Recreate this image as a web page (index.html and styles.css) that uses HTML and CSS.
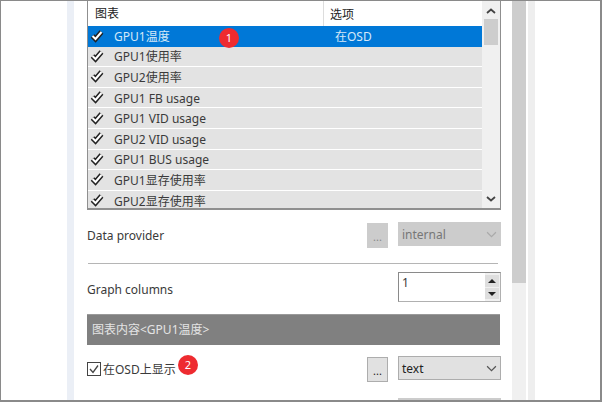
FILE: index.html
```html
<!DOCTYPE html>
<html lang="zh">
<head>
<meta charset="utf-8">
<title>Graph settings</title>
<link rel="stylesheet" href="styles.css">
</head>
<body>
<div class="frame">
  <div class="gutter"><div class="strip"></div></div>
  <div class="panel">
    <div class="listbox">
      <div class="list">
        <div class="head"><span class="c1">图表</span><span class="c2">选项</span></div>
        <div class="row sel"><svg class="chk" viewBox="0 0 14 13"><path class="o" d="M2.5 7 5.5 10 11.5 3"/><path class="i" d="M2.5 7 5.5 10 11.5 3"/></svg><span class="c1n">GPU1温度</span><span class="c2n">在OSD</span></div>
        <div class="row"><svg class="chk" viewBox="0 0 14 13"><path class="o" d="M2.5 7 5.5 10 11.5 3"/><path class="i" d="M2.5 7 5.5 10 11.5 3"/></svg><span class="c1n">GPU1使用率</span></div>
        <div class="row"><svg class="chk" viewBox="0 0 14 13"><path class="o" d="M2.5 7 5.5 10 11.5 3"/><path class="i" d="M2.5 7 5.5 10 11.5 3"/></svg><span class="c1n">GPU2使用率</span></div>
        <div class="row"><svg class="chk" viewBox="0 0 14 13"><path class="o" d="M2.5 7 5.5 10 11.5 3"/><path class="i" d="M2.5 7 5.5 10 11.5 3"/></svg><span class="c1n">GPU1 FB usage</span></div>
        <div class="row"><svg class="chk" viewBox="0 0 14 13"><path class="o" d="M2.5 7 5.5 10 11.5 3"/><path class="i" d="M2.5 7 5.5 10 11.5 3"/></svg><span class="c1n">GPU1 VID usage</span></div>
        <div class="row"><svg class="chk" viewBox="0 0 14 13"><path class="o" d="M2.5 7 5.5 10 11.5 3"/><path class="i" d="M2.5 7 5.5 10 11.5 3"/></svg><span class="c1n">GPU2 VID usage</span></div>
        <div class="row"><svg class="chk" viewBox="0 0 14 13"><path class="o" d="M2.5 7 5.5 10 11.5 3"/><path class="i" d="M2.5 7 5.5 10 11.5 3"/></svg><span class="c1n">GPU1 BUS usage</span></div>
        <div class="row"><svg class="chk" viewBox="0 0 14 13"><path class="o" d="M2.5 7 5.5 10 11.5 3"/><path class="i" d="M2.5 7 5.5 10 11.5 3"/></svg><span class="c1n">GPU1显存使用率</span></div>
        <div class="row"><svg class="chk" viewBox="0 0 14 13"><path class="o" d="M2.5 7 5.5 10 11.5 3"/><path class="i" d="M2.5 7 5.5 10 11.5 3"/></svg><span class="c1n">GPU2显存使用率</span></div>
      </div>
      <div class="vscroll">
        <svg class="arrow a-up" viewBox="0 0 10 6"><path d="M1 5 5 1.5 9 5"/></svg>
        <div class="vthumb"></div>
        <div class="vspace"></div>
        <svg class="arrow a-down" viewBox="0 0 10 6"><path d="M1 1 5 4.5 9 1"/></svg>
      </div>
      <span class="badge b1">1</span>
    </div>
    <div class="field f-provider">
      <span class="label">Data provider</span>
      <span class="dots off">...</span>
      <span class="select off"><span>internal</span><svg viewBox="0 0 10 6"><path d="M1 1 5 5 9 1"/></svg></span>
    </div>
    <div class="rule"></div>
    <div class="field f-columns">
      <span class="label">Graph columns</span>
      <span class="spin"><span class="val">1</span><span class="btns"><i class="up"></i><i class="down"></i></span></span>
    </div>
    <div class="banner">图表内容&lt;GPU1温度&gt;</div>
    <div class="field f-osd">
      <label class="check"><svg class="cb" viewBox="0 0 14 14"><rect x=".5" y=".5" width="13" height="13"/><path d="M3 7 6 10.5 11 3.5"/></svg>在OSD上显示<span class="badge b2">2</span></label>
      <span class="dots">...</span>
      <span class="select"><span>text</span><svg viewBox="0 0 10 6"><path d="M1 1 5 5 9 1"/></svg></span>
    </div>
    <div class="cut"></div>
  </div>
  <div class="track"><div class="thumb"></div></div>
  <div class="strip2"></div>
</div>
</body>
</html>
```
FILE: styles.css
```css
* { box-sizing: border-box; }
html, body { margin: 0; padding: 0; }
body { width: 602px; height: 402px; background: #fff; overflow: hidden; font-family: "Noto Sans", "Noto Sans CJK SC", sans-serif; font-size: 12px; color: #3a3a3a; }
.frame { width: 602px; height: 402px; display: flex; border: 1px solid #8a8a8a; border-bottom-width: 2px; border-right-width: 2px; overflow: hidden; }
.gutter { width: 73px; flex: none; padding-left: 66px; }
.strip { width: 7px; height: 100%; background: #ebeff6; }
.panel { width: 438px; flex: none; padding: 0 11px 0 13px; }
.listbox { height: 209px; border: 1px solid #8f8f8f; border-top: 0; border-bottom-width: 2px; display: flex; position: relative; }
.list { width: 394px; flex: none; overflow: hidden; }
.head { height: 25px; display: flex; align-items: center; color: #222; }
.c1 { width: 236px; height: 25px; padding-left: 7px; border-right: 1px solid #ddd; line-height: 25px; flex: none; }
.c2 { padding-left: 6px; }
.row { height: 20.6px; background: #e3e3e3; border-bottom: 1px solid #fff; display: flex; align-items: center; line-height: 12px; }
.row.sel { background: #0078d7; color: #d6e8f8; border-bottom: 0; }
.chk { width: 14px; height: 13px; margin: 0 0 2px 2px; fill: none; flex: none; overflow: visible; }
.chk .o { stroke: #222; stroke-width: 5; }
.chk .i { stroke: #fff; stroke-width: 2; }
.c1n { margin: 2px 0 0 10px; width: 221px; flex: none; }
.c2n { margin-top: 2px; }
.vscroll { flex: 1; background: #f0f0f0; display: flex; flex-direction: column; align-items: center; }
.arrow { width: 10px; height: 6px; fill: none; stroke: #444; stroke-width: 1.8; flex: none; }
.a-up { margin: 7px 0 5px; }
.a-down { margin-bottom: 6px; }
.vthumb { width: 14px; height: 26px; background: #cdcdcd; }
.vspace { flex: 1; }
.badge { position: absolute; width: 20px; height: 20px; border-radius: 50%; background: #ee2b30; color: #fff; font-size: 11px; text-align: center; line-height: 20px; }
.b1 { left: 131px; top: 27px; }
.b2 { left: 91px; top: -1px; }
.field { display: flex; align-items: flex-start; height: 26px; }
.f-provider { margin-top: 12px; }
.label { flex: 1; margin-top: 5px; }
.dots { width: 21px; height: 25px; margin: 1px 10px 0 0; background: #e1e1e1; border: 1px solid #adadad; text-align: center; line-height: 26px; font-size: 11px; color: #222; flex: none; }
.dots.off { background: #ccc; border-color: #ccc; color: #888; }
.select { width: 103px; height: 24px; background: #e1e1e1; border: 1px solid #adadad; display: flex; align-items: center; justify-content: space-between; padding: 0 3px; color: #222; flex: none; }
.select svg { width: 11px; height: 7px; fill: none; stroke: #555; stroke-width: 1.1; }
.select.off { background: #ccc; border-color: #ccc; color: #777; }
.select.off svg { stroke: #aaa; }
.rule { height: 1px; background: #b5b5b5; width: 410px; margin: 15px 0 0 1px; }
.f-columns { height: 30px; margin-top: 8px; }
.f-columns .label { margin-top: 9px; }
.spin { width: 103px; height: 30px; border: 1px solid #8a8a8a; border-right-color: #b0b0b0; border-bottom-color: #b0b0b0; display: flex; flex: none; }
.val { flex: 1; padding: 1px 0 0 3px; }
.btns { width: 15px; padding: 2px 1px 2px 0; background: #f0f0f0; display: flex; flex-direction: column; gap: 1px; }
.btns i { flex: 1; background: #dedede; position: relative; }
.btns i::after { content: ""; position: absolute; left: 3px; top: 4px; border-left: 4px solid transparent; border-right: 4px solid transparent; }
.up::after { border-bottom: 4px solid #222; }
.down::after { border-top: 4px solid #222; }
.banner { width: 413px; height: 31px; margin-top: 12px; background: #808080; border-top: 1px solid #9a9a9a; color: #e4e4e4; padding-left: 5px; line-height: 30px; }
.f-osd { margin-top: 11px; }
.check { flex: 1; display: flex; align-items: center; position: relative; gap: 2px; height: 26px; }
.cb { width: 14px; height: 14px; fill: #fff; stroke: #444; stroke-width: 1; }
.cb path { fill: none; stroke-width: 1.3; }
.cut { width: 103px; height: 4px; background: #ccc; margin: 16px 0 0 311px; }
.track { width: 14px; flex: none; background: #f0f0f0; }
.thumb { height: 282px; background: #cdcdcd; }
.strip2 { width: 7px; margin-left: 2px; flex: none; background: #eee; }
```
